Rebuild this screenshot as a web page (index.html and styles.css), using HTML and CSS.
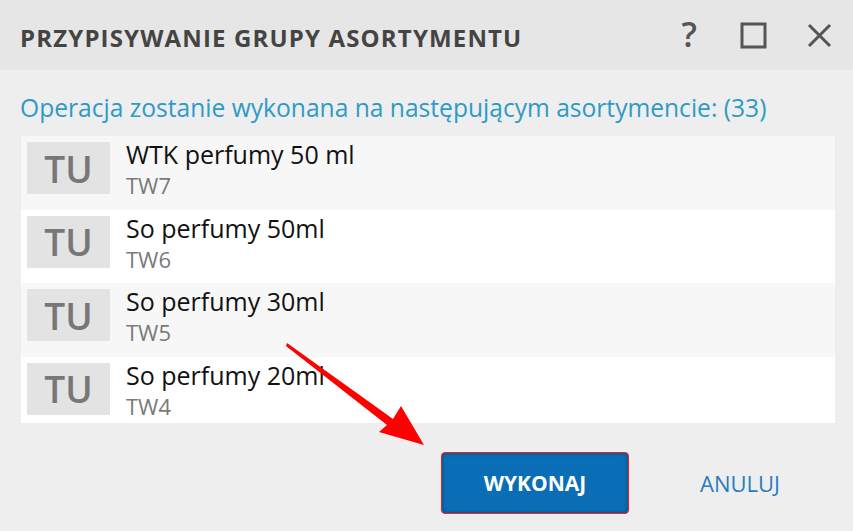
FILE: index.html
```html
<!DOCTYPE html>
<html lang="pl">

<head>
    <meta charset="UTF-8">
    <meta name="viewport" content="width=device-width, initial-scale=1.0">
    <title>Przypisywanie grupy asortymentu</title>
    <link rel="stylesheet" href="styles.css">
</head>

<body>
    <div class="dialog">
        <header class="dialog-header">
            <h1>PRZYPISYWANIE GRUPY ASORTYMENTU</h1>
            <div class="window-buttons">
                <span class="help">?</span>
                <svg class="icon" width="27" height="27" viewBox="0 0 27 27">
                    <rect x="2" y="2" width="23" height="23" fill="none" stroke="#555" stroke-width="3" />
                </svg>
                <svg class="icon" width="25" height="25" viewBox="0 0 25 25">
                    <path d="M2 2 L23 23 M23 2 L2 23" stroke="#555" stroke-width="3" />
                </svg>
            </div>
        </header>

        <p class="info">Operacja zostanie wykonana na następującym asortymencie: (33)</p>

        <!-- lista asortymentu, przewijana -->
        <div class="items">
            <div class="item">
                <div class="thumb">TU</div>
                <div class="item-text">
                    <div class="item-name">WTK perfumy 50 ml</div>
                    <div class="item-code">TW7</div>
                </div>
            </div>
            <div class="item">
                <div class="thumb">TU</div>
                <div class="item-text">
                    <div class="item-name">So perfumy 50ml</div>
                    <div class="item-code">TW6</div>
                </div>
            </div>
            <div class="item">
                <div class="thumb">TU</div>
                <div class="item-text">
                    <div class="item-name">So perfumy 30ml</div>
                    <div class="item-code">TW5</div>
                </div>
            </div>
            <div class="item">
                <div class="thumb">TU</div>
                <div class="item-text">
                    <div class="item-name">So perfumy 20ml</div>
                    <div class="item-code">TW4</div>
                </div>
            </div>
        </div>

        <footer class="dialog-footer">
            <button class="btn-primary">WYKONAJ</button>
            <button class="btn-link">ANULUJ</button>
        </footer>

        <!-- czerwona strzalka z adnotacji -->
        <svg class="arrow" width="853" height="531" viewBox="0 0 853 531">
            <polygon points="287,343 393,419 401,406 424,445 379,432 387,425 286,346" fill="#ff0000" />
        </svg>
    </div>
</body>

</html>
```

FILE: styles.css
```css
html, body {
    margin: 0;
    padding: 0;
    overflow: hidden;
}

body {
    font-family: "Open Sans", "Noto Sans", sans-serif;
    background-color: #eeeeee;
}

.dialog {
    position: relative;
    width: 853px;
    height: 531px;
    background-color: #eeeeee;
}

.dialog-header {
    height: 70px;
    display: flex;
    align-items: center;
    justify-content: space-between;
    padding: 0 21px 0 20px;
    background-color: #e6e6e6;
}

.dialog-header h1 {
    margin: 5px 0 0 0;
    font-size: 24px;
    font-weight: 700;
    color: #444;
    letter-spacing: 1.15px;
    line-height: 30px;
}

.window-buttons {
    display: flex;
    align-items: center;
    gap: 40px;
}

.help {
    font-size: 34px;
    font-weight: 600;
    color: #555;
    line-height: 1;
    margin-top: -2px;
    margin-right: 3px;
}

.info {
    margin: 23px 0 13px 20px;
    font-size: 24.6px;
    color: #2e9ac8;
    line-height: 30px;
    white-space: nowrap;
}

.items {
    width: 814px;
    height: 287px;
    margin-left: 21px;
    overflow: hidden;
    background-color: #ffffff;
}

.item {
    height: 73.5px;
    display: flex;
    align-items: flex-start;
    padding: 6px;
    box-sizing: border-box;
}

.item:nth-child(odd) {
    background-color: #f7f7f7;
}

.thumb {
    width: 83px;
    height: 52px;
    flex-shrink: 0;
    background-color: #e3e3e3;
    color: #777;
    font-size: 37px;
    font-weight: 600;
    display: flex;
    align-items: center;
    justify-content: center;
}

.item-text {
    margin-left: 16px;
}

.item-name {
    font-size: 25px;
    color: #111;
    line-height: 30px;
    margin-top: -3px;
}

.item-code {
    font-size: 22px;
    color: #7a7a7a;
    line-height: 26px;
    margin-top: 3px;
}

.dialog-footer {
    display: flex;
    align-items: center;
    padding: 29px 0 0 441px;
}

.btn-primary {
    width: 188px;
    height: 62px;
    background-color: #0a6eb6;
    border: 1.5px solid #ff1a1a;
    border-radius: 4px;
    box-shadow: inset 0 0 4px rgba(0, 0, 0, 0.35);
    color: white;
    font-family: "Open Sans", sans-serif;
    font-size: 21px;
    font-weight: 700;
    cursor: pointer;
}

.btn-link {
    margin-left: 51px;
    background: none;
    border: none;
    color: #2a7dbd;
    font-family: "Open Sans", sans-serif;
    font-size: 22px;
    padding: 0 20px;
    cursor: pointer;
}

.arrow {
    position: absolute;
    left: 0;
    top: 0;
    pointer-events: none;
}
```
